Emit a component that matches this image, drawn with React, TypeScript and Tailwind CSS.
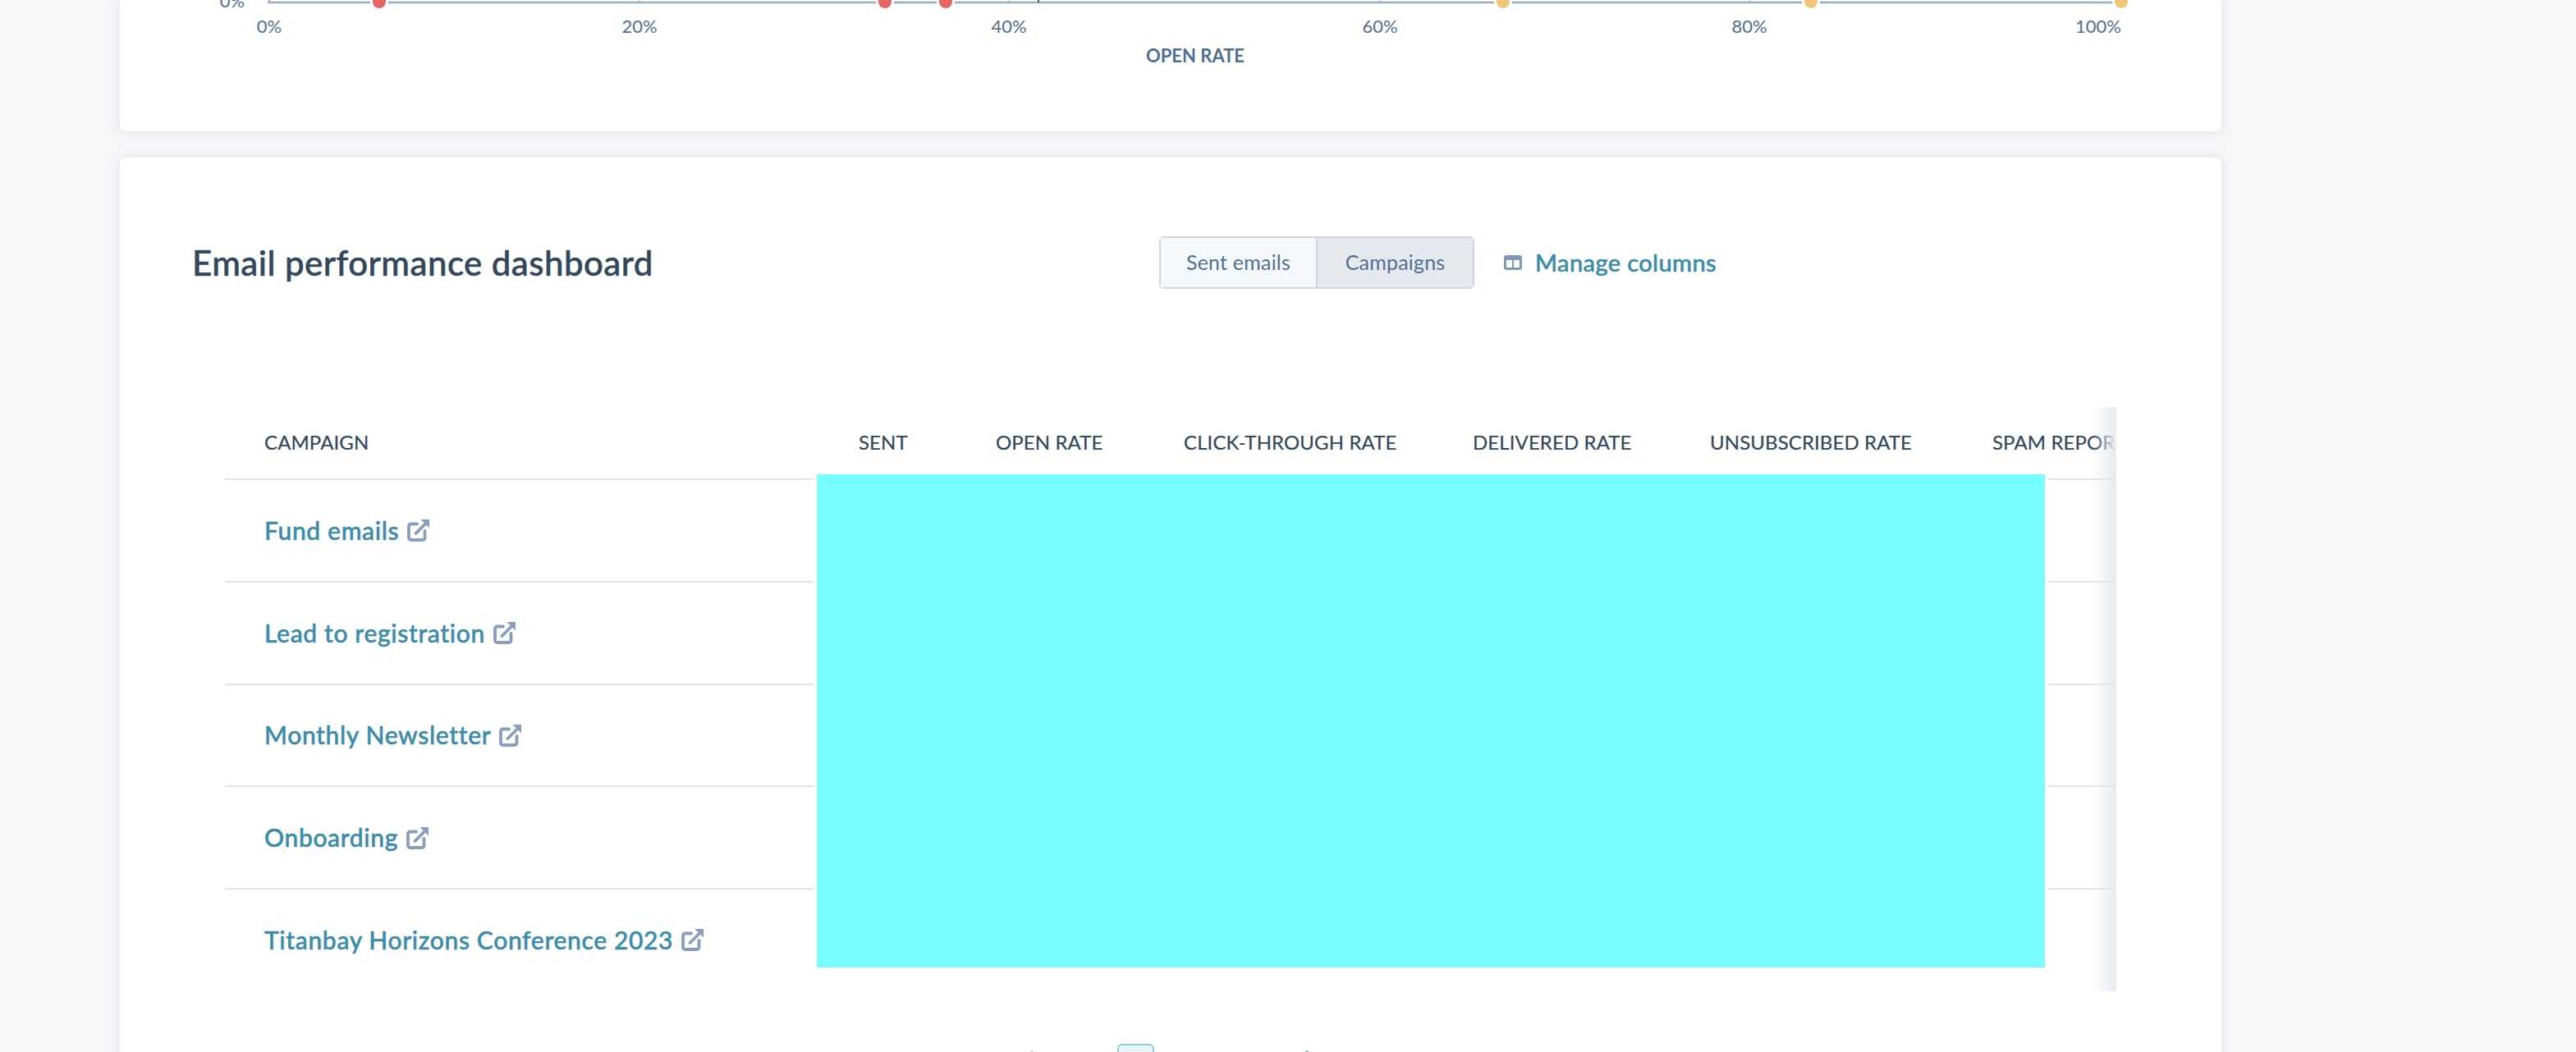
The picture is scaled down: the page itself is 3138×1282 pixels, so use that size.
const font = "font-['Lato','Liberation_Sans',sans-serif]"
const mediumFont = "font-['Lato_Medium','Lato','Liberation_Sans',sans-serif]"

const redDots = [462, 1078, 1152]
const yellowDots = [1831, 2206, 2584]
const xTicks = [
  { x: 328, label: "0%", labelX: 328, anchor: "middle" },
  { x: 779, label: "20%", labelX: 779, anchor: "middle" },
  { x: 1229, label: "40%", labelX: 1229, anchor: "middle" },
  { x: 1681, label: "60%", labelX: 1681, anchor: "middle" },
  { x: 2131, label: "80%", labelX: 2131, anchor: "middle" },
  { x: 2582, label: "100%", labelX: 2584, anchor: "end" },
]

const columns = [
  { title: "SENT", width: "w-[167px]" },
  { title: "OPEN RATE", width: "w-[229px]" },
  { title: "CLICK-THROUGH RATE", width: "w-[352px]" },
  { title: "DELIVERED RATE", width: "w-[289px]" },
  { title: "UNSUBSCRIBED RATE", width: "w-[344px]" },
  { title: "SPAM REPORT RATE", width: "w-[400px]" },
]

const campaigns = [
  "Fund emails",
  "Lead to registration",
  "Monthly Newsletter",
  "Onboarding",
  "Titanbay Horizons Conference 2023",
]

function ExternalIcon() {
  return (
    <svg width="28" height="28" viewBox="0 0 28 28" fill="none" className="shrink-0">
      <path
        d="M12 6.5H4.5A2.5 2.5 0 0 0 2 9v14.5A2.5 2.5 0 0 0 4.5 26H19a2.5 2.5 0 0 0 2.5-2.5V15"
        stroke="#8a9dbb"
        strokeWidth="3.8"
        strokeLinecap="round"
      />
      <path d="M10.5 18 24 4.5" stroke="#8a9dbb" strokeWidth="3.8" strokeLinecap="round" />
      <path d="M16.5 1h10.5v10.5z" fill="#8a9dbb" />
    </svg>
  )
}

function ColumnsIcon() {
  return (
    <svg width="22" height="18" viewBox="0 0 22 18" className="shrink-0">
      <rect x="0" y="0" width="22" height="18" rx="3" fill="#7f97b8" />
      <rect x="3" y="6" width="7" height="9" fill="#fff" />
      <rect x="12" y="6" width="7" height="9" fill="#fff" />
    </svg>
  )
}

function Chevron({ points, color }: { points: string; color: string }) {
  return (
    <svg width="16" height="24" viewBox="0 0 16 24" fill="none" className="mt-[8px] shrink-0">
      <polyline points={points} stroke={color} strokeWidth="3" strokeLinecap="round" strokeLinejoin="round" />
    </svg>
  )
}

function ScatterAxis() {
  return (
    <svg width="2560" height="160" viewBox="146 0 2560 160" className="block">
      <line x1="326" y1="3" x2="2586" y2="3" stroke="#9cabc2" strokeWidth="2.5" />
      <line x1="328" y1="0" x2="328" y2="3" stroke="#9cabc2" strokeWidth="2" />
      <line x1="1265" y1="0" x2="1265" y2="3" stroke="#425b76" strokeWidth="2" />
      {xTicks.map((t) => (
        <g key={t.label}>
          <line x1={t.x} y1="0" x2={t.x} y2="3" stroke="#9cabc2" strokeWidth="1" />
          <text x={t.labelX} y="40" textAnchor={t.anchor as "middle" | "end"} fill="#516f90" className={`${font} text-[22px]`}>
            {t.label}
          </text>
        </g>
      ))}
      <text x="283" y="9" textAnchor="middle" fill="#516f90" className={`${font} text-[22px]`}>
        0%
      </text>
      <text x="1456" y="76" textAnchor="middle" fill="#516f90" className={`${font} text-[22px] font-bold`}>
        OPEN RATE
      </text>
      {redDots.map((x) => (
        <g key={x}>
          <circle cx={x} cy="2" r="11" fill="#fff" />
          <circle cx={x} cy="2" r="8" fill="#e56464" />
        </g>
      ))}
      {yellowDots.map((x) => (
        <g key={x}>
          <circle cx={x} cy="2" r="11" fill="#fff" />
          <circle cx={x} cy="2" r="8" fill="#f0c678" />
        </g>
      ))}
    </svg>
  )
}

export default function App() {
  return (
    <div className={`${font} h-[1282px] overflow-hidden bg-[#f6f7f9] pl-[146px]`}>
      <div className="h-[160px] w-[2560px] rounded-b-lg bg-white shadow-[0_0_14px_rgba(45,62,80,0.12)]">
        <ScatterAxis />
      </div>

      <div className="mt-[32px] h-[1200px] w-[2560px] rounded-lg bg-white pt-[96px] shadow-[0_0_14px_rgba(45,62,80,0.12)]">
        <div className="flex h-[64px] items-center pl-[88px]">
          <h2 className={`${mediumFont} w-[1178px] text-[42px] font-medium tracking-[0.45px] text-[#33475b] [-webkit-text-stroke:0.5px]`}>
            Email performance dashboard
          </h2>
          <div className="flex h-[64px] w-[384px] rounded-md border-2 border-[#cbd6e2] text-[25px] tracking-[0.2px] text-[#516f90]">
            <div className="flex w-[191px] items-center justify-center border-r-2 border-[#cbd6e2] bg-[#f5f8fa]">
              Sent emails
            </div>
            <div className="flex flex-1 items-center justify-center bg-[#e5e8ed]">Campaigns</div>
          </div>
          <div className={`${mediumFont} ml-[36px] flex items-center gap-[16px] text-[29px] font-medium tracking-[0.4px] text-[#3b8ca9] [-webkit-text-stroke:0.5px]`}>
            <ColumnsIcon />
            <span>Manage columns</span>
          </div>
        </div>

        <div className="relative ml-[128px] mt-[144px] h-[712px] w-[2304px] overflow-hidden">
          <div className="flex h-[87px] items-center whitespace-nowrap pb-[2px] text-[24px] tracking-[0.1px] text-[#33475b] [-webkit-text-stroke:0.2px]">
            <div className="w-[724px] shrink-0 pl-[48px]">CAMPAIGN</div>
            {columns.map((c) => (
              <div key={c.title} className={`${c.width} shrink-0 pl-[48px]`}>
                {c.title}
              </div>
            ))}
          </div>
          {campaigns.map((name) => (
            <div key={name} className="flex h-[124.75px] items-center gap-[10px] border-t-2 border-[#dfe3eb] pl-[48px]">
              <span className={`${mediumFont} text-[30px] font-medium tracking-[0.65px] text-[#3b8ca9] [-webkit-text-stroke:0.5px]`}>{name}</span>
              <ExternalIcon />
            </div>
          ))}
          <div className="absolute left-[721px] top-[82px] h-[601px] w-[1496px] bg-[#77fdff] shadow-[0_0_0_4px_#fff]" />
          <div className="absolute bottom-0 right-0 top-0 w-[30px] bg-gradient-to-r from-white/0 to-[#e6e9ef]" />
        </div>

        <div className="mt-[64px] flex h-[46px] items-start pl-[1099px] text-[24px]">
          <Chevron points="12,2 4,12 12,22" color="#b0c1d4" />
          <div className="ml-[100px] flex h-[46px] w-[45px] shrink-0 items-center justify-center rounded-md border-2 border-[#8ad0dd] bg-[#e5f5f8] text-[#33475b]">
            1
          </div>
          <div className="ml-[182px]">
            <Chevron points="4,2 12,12 4,22" color="#3b8ca9" />
          </div>
        </div>
      </div>
    </div>
  )
}
